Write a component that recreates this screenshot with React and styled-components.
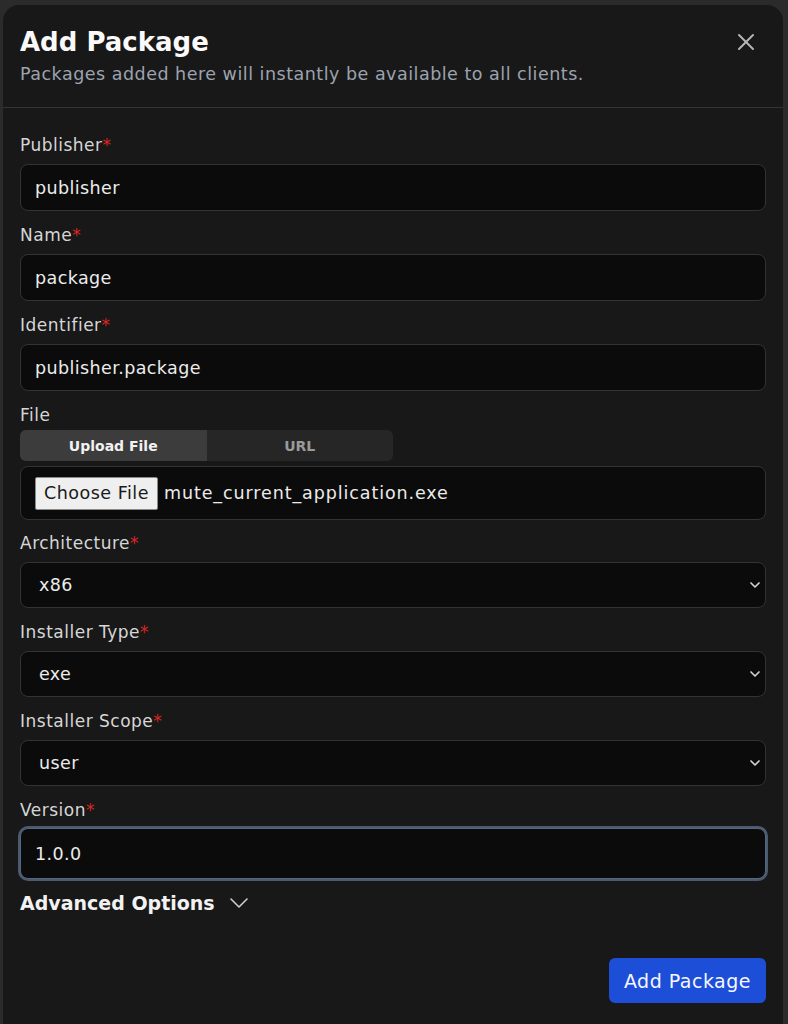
import React from 'react'
import styled, { createGlobalStyle } from "styled-components";
import { X } from 'lucide-react';

const GlobalStyle = createGlobalStyle`
  html, body {
    margin: 0;
    background: #2b2b2b;
    font-family: "DejaVu Sans", "Inter", sans-serif;
  }
  * { box-sizing: border-box; }
`;

const Caret = ({ size = 10, stroke = 2 }) => (
    <svg width={size} height={size * 0.6} viewBox="0 0 20 12" fill="none" stroke="currentColor" strokeWidth={stroke} strokeLinecap="round" strokeLinejoin="round">
        <polyline points="2,2 10,10 18,2"/>
    </svg>
);

export default function App() {
    return <Page>
        <GlobalStyle/>
        <Modal>
            <Header>
                <div>
                    <Title>Add Package</Title>
                    <Subtitle>Packages added here will instantly be available to all clients.</Subtitle>
                </div>
                <CloseButton aria-label="Close"><X size={28} strokeWidth={1.7}/></CloseButton>
            </Header>
            <Body>
                <Field>
                    <Label>Publisher<Req>*</Req></Label>
                    <Input defaultValue="publisher"/>
                </Field>
                <Field>
                    <Label>Name<Req>*</Req></Label>
                    <Input defaultValue="package"/>
                </Field>
                <Field>
                    <Label>Identifier<Req>*</Req></Label>
                    <Input defaultValue="publisher.package"/>
                </Field>
                <Field>
                    <Label>File</Label>
                    <Tabs>
                        <Tab $active>Upload File</Tab>
                        <Tab>URL</Tab>
                    </Tabs>
                    <FileBox>
                        <ChooseButton>Choose File</ChooseButton>
                        <FileName>mute_current_application.exe</FileName>
                    </FileBox>
                </Field>
                <Field>
                    <Label>Architecture<Req>*</Req></Label>
                    <SelectWrap>
                        <Select defaultValue="x86"><option>x86</option><option>x64</option><option>arm64</option></Select>
                        <Chevron><Caret size={10} stroke={3.4}/></Chevron>
                    </SelectWrap>
                </Field>
                <Field>
                    <Label>Installer Type<Req>*</Req></Label>
                    <SelectWrap>
                        <Select defaultValue="exe"><option>exe</option><option>msi</option></Select>
                        <Chevron><Caret size={10} stroke={3.4}/></Chevron>
                    </SelectWrap>
                </Field>
                <Field>
                    <Label>Installer Scope<Req>*</Req></Label>
                    <SelectWrap>
                        <Select defaultValue="user"><option>user</option><option>machine</option></Select>
                        <Chevron><Caret size={10} stroke={3.4}/></Chevron>
                    </SelectWrap>
                </Field>
                <Field>
                    <Label>Version<Req>*</Req></Label>
                    <Input $focused defaultValue="1.0.0"/>
                </Field>
                <Advanced>Advanced Options <Caret size={20} stroke={1.6}/></Advanced>
            </Body>
            <Footer>
                <SubmitButton>Add Package</SubmitButton>
            </Footer>
        </Modal>
    </Page>;
}

const Page = styled.div`
  padding: 5px 5px 0 3px;
  min-height: 1024px;
`;

const Modal = styled.div`
  background: #181818;
  border-radius: 16px 16px 0 0;
  min-height: 1019px;
  color: #e5e5e5;
`;

const Header = styled.div`
  display: flex;
  justify-content: space-between;
  align-items: flex-start;
  padding: 20px 17px 21px 17px;
  border-bottom: 1px solid #343434;
`;

const Title = styled.h2`
  margin: 0;
  font-size: 26px;
  line-height: 34px;
  font-weight: 700;
  color: #fafafa;
`;

const Subtitle = styled.p`
  margin: 3px 0 0;
  font-size: 17.5px;
  letter-spacing: 0.5px;
  line-height: 24px;
  color: #9ca3af;
`;

const CloseButton = styled.button`
  background: none;
  border: none;
  padding: 0;
  margin: 3px 6px 0 0;
  color: #b4b4b4;
  display: flex;
`;

const Body = styled.div`
  display: flex;
  flex-direction: column;
  gap: 12px;
  padding: 25px 17px 0;
`;

const Field = styled.div`
  display: flex;
  flex-direction: column;
`;

const Label = styled.label`
  font-size: 17px;
  letter-spacing: 0.5px;
  line-height: 25px;
  color: #d6d6d6;
  margin-bottom: 6px;
`;

const Req = styled.span`
  color: #dc2626;
`;

const Input = styled.input`
  height: ${p => p.$focused ? '51px' : '47px'};
  margin-top: ${p => p.$focused ? '-1px' : '0'};
  width: 100%;
  background: #0b0b0b;
  border: 1px solid ${p => p.$focused ? '#56667c' : '#333'};
  box-shadow: ${p => p.$focused ? '0 0 0 2px #4a5a70' : 'none'};
  border-radius: 8px;
  padding: 0 14px;
  font: inherit;
  font-size: 17.5px;
  letter-spacing: 0.4px;
  color: #ececec;
  outline: none;
`;

const Tabs = styled.div`
  display: grid;
  grid-template-columns: 1fr 1fr;
  width: 373px;
  height: 31px;
  margin-top: -4px;
  background: #262626;
  border-radius: 6px;
  overflow: hidden;
`;

const Tab = styled.div`
  display: flex;
  align-items: center;
  justify-content: center;
  font-size: 14px;
  font-weight: 700;
  background: ${p => p.$active ? '#3c3c3c' : 'transparent'};
  color: ${p => p.$active ? '#f2f2f2' : '#9a9a9a'};
`;

const FileBox = styled.div`
  display: flex;
  align-items: center;
  gap: 6px;
  height: 54px;
  margin-top: 5px;
  margin-bottom: -1px;
  background: #0b0b0b;
  border: 1px solid #333;
  border-radius: 8px;
  padding: 0 14px;
`;

const ChooseButton = styled.button`
  height: 33px;
  width: 123px;
  background: #efefef;
  border: 1px solid #8a8a8a;
  border-radius: 2px;
  font: inherit;
  font-size: 17.5px;
  letter-spacing: 0.5px;
  color: #1a1a1a;
  padding: 0;
`;

const FileName = styled.span`
  font-size: 17.5px;
  letter-spacing: 0.9px;
  color: #ececec;
`;

const SelectWrap = styled.div`
  position: relative;
`;

const Select = styled.select`
  appearance: none;
  width: 100%;
  height: 46px;
  background: #0b0b0b;
  border: 1px solid #333;
  border-radius: 8px;
  padding: 0 18px;
  font: inherit;
  font-size: 17.5px;
  letter-spacing: 0.4px;
  color: #ececec;
  outline: none;
`;

const Chevron = styled.span`
  position: absolute;
  right: 6px;
  top: 50%;
  transform: translateY(-50%);
  display: flex;
  color: #d0d0d0;
  pointer-events: none;
`;

const Advanced = styled.div`
  display: flex;
  align-items: center;
  gap: 14px;
  font-size: 19px;
  line-height: 24px;
  font-weight: 700;
  color: #f2f2f2;
  svg { color: #cfcfcf; }
`;

const Footer = styled.div`
  display: flex;
  justify-content: flex-end;
  padding: 43px 17px 0;
`;

const SubmitButton = styled.button`
  height: 45px;
  padding: 0 15px;
  background: #1d4ed8;
  border: none;
  border-radius: 6px;
  font: inherit;
  font-size: 19px;
  letter-spacing: 0.5px;
  color: #f5f7ff;
`;
